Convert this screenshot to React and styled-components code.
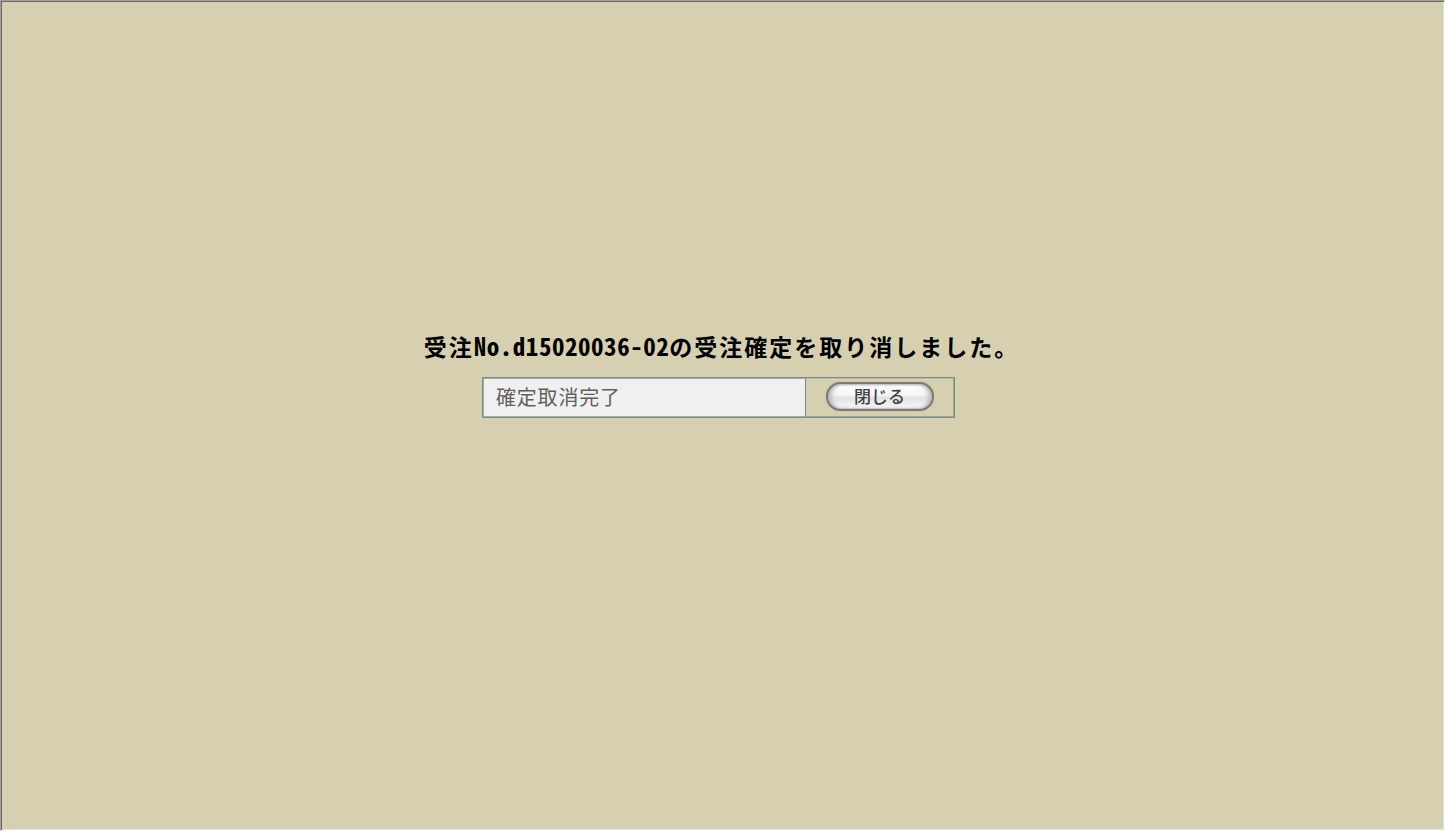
import React from "react";
import styled, { createGlobalStyle } from "styled-components";

const GlobalStyle = createGlobalStyle`
  body { margin: 0; }
  * { box-sizing: border-box; }
`;

const Frame = styled.main`
  height: 100vh;
  overflow: hidden;
  display: flex;
  flex-direction: column;
  align-items: center;
  padding: 327px 8px 0 0;
  background: #d6d0b0;
  border: 1px solid;
  border-color: #a0a0a0 #ffffff #ffffff #a0a0a0;
  box-shadow: inset 1px 1px #696969, inset -1px -1px #e3e3e3;
  font-family: "Noto Sans CJK JP", sans-serif;
`;

const Message = styled.h1`
  margin: 0;
  height: 36px;
  padding-left: 6px;
  font-size: 23px;
  line-height: 36px;
  font-weight: 700;
  letter-spacing: 2px;
  white-space: nowrap;
  color: #000;
`;

const HalfWidth = styled.span`
  font-size: 25px;
  line-height: 1;
  font-feature-settings: "hwid" 1;
  letter-spacing: 0.54px;
`;

const Panel = styled.section`
  display: flex;
  width: 473px;
  height: 41px;
  margin-top: 13px;
  border: 1px solid #7d8b8b;
`;

const Status = styled.div`
  width: 322px;
  padding-left: 13px;
  background: #f0f0f0;
  box-shadow: inset 1px 1px #a3aca1, inset 0 -1px #a3aca1;
  color: #606060;
  font-size: 20px;
  line-height: 38px;
  letter-spacing: 0.8px;
`;

const Actions = styled.div`
  flex: 1;
  display: flex;
  align-items: center;
  justify-content: center;
  border-left: 1px solid #7b8b8b;
  box-shadow: inset -1px 0 #9da493, inset 0 1px #b9bca5, inset 0 -1px #9da493;
`;

const CloseButton = styled.button`
  width: 108px;
  height: 29px;
  margin: 0 1px 2px 0;
  padding: 0 0 2px;
  border: 2px solid #7d7975;
  border-radius: 15px;
  background: linear-gradient(#ffffff 0%, #f5f5f5 45%, #e2e2e2 55%, #f8f8f8 100%);
  box-shadow: inset 5px 0 5px -2px #b5b5b5, inset -5px 0 5px -2px #b5b5b5,
    inset 0 1px 2px #bbb, inset 0 -1px 1px #ccc, 0 0 1px #8b8679;
  color: #404040;
  font-family: inherit;
  font-size: 17px;
  line-height: 23px;
  font-weight: 500;
`;

export default function App() {
  return (
    <>
      <GlobalStyle />
      <Frame>
        <Message>
          受注<HalfWidth>No.d15020036-02</HalfWidth>の受注確定を取り消しました。
        </Message>
        <Panel>
          <Status>確定取消完了</Status>
          <Actions>
            <CloseButton type="button">閉じる</CloseButton>
          </Actions>
        </Panel>
      </Frame>
    </>
  );
}
